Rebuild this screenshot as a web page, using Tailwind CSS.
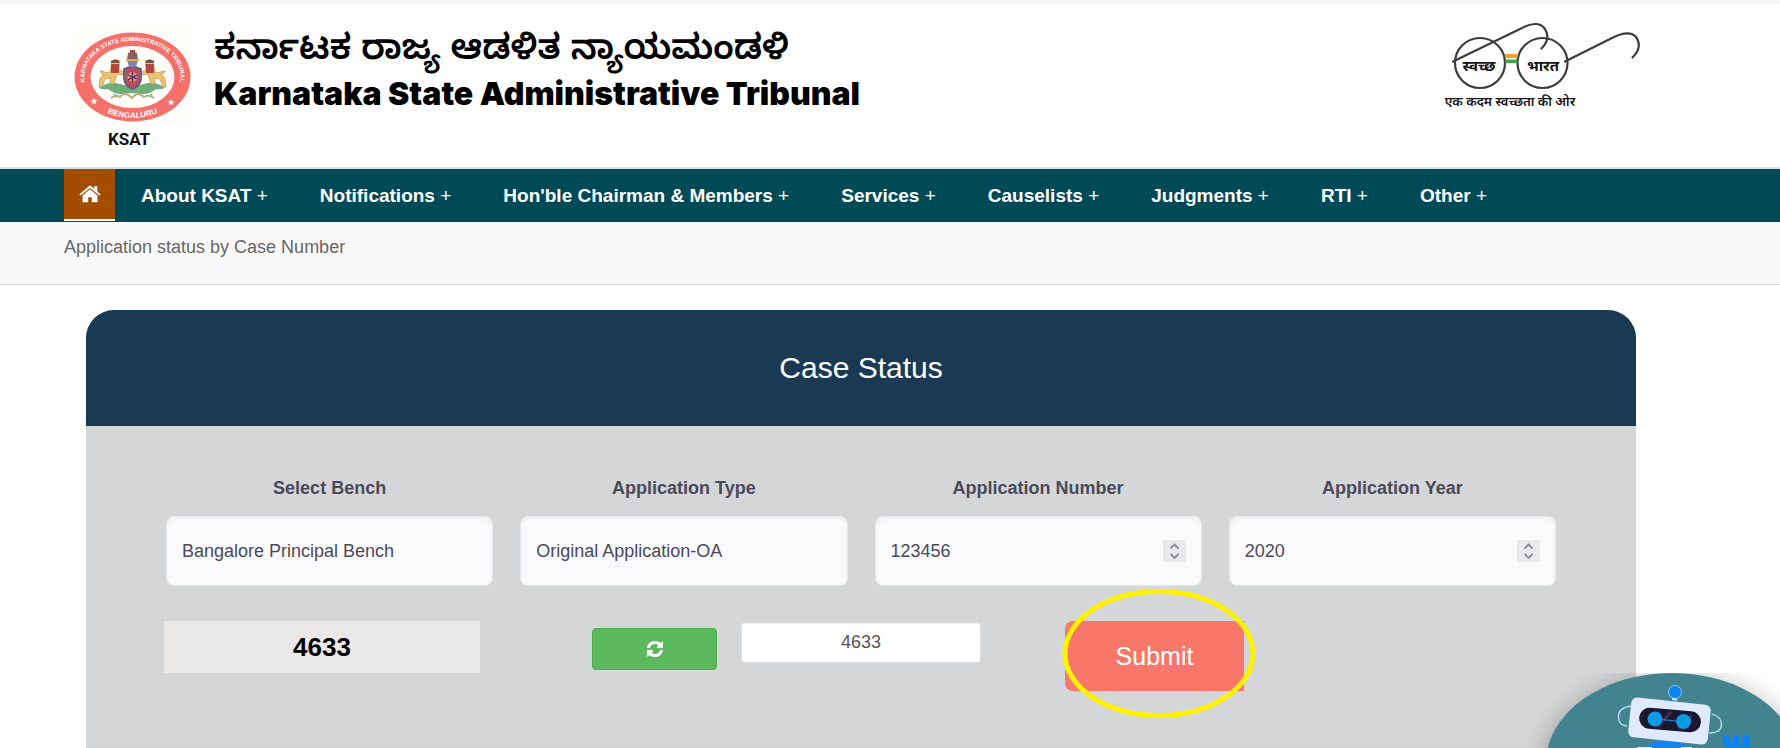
<!DOCTYPE html>
<html lang="en">
<head>
<meta charset="utf-8">
<meta name="viewport" content="width=device-width, initial-scale=1">
<title>Karnataka State Administrative Tribunal</title>
<script src="https://cdn.jsdelivr.net/npm/@tailwindcss/browser@4"></script>
</head>
<body class="min-h-screen overflow-x-hidden bg-white font-['Liberation_Sans',Arial,sans-serif] text-lg leading-6 text-[#4b4a59]">

<header class="flex items-start border-t-4 border-b-2 border-t-[#f8f8f8] border-b-[#d3e2e7] pt-5 pr-[135px] pb-[13px] pl-16">
  <svg class="h-[130px] w-[140px] shrink-0" viewBox="0 0 140 130" role="img" aria-label="KSAT emblem">
    <defs>
      <path id="ringTop" d="M25.500 69A48 36 0 1 1 111.500 69"/>
      <path id="ringBottom" d="M23 74A53 41 0 0 0 114 74"/>
    </defs>
    <rect x="10" y="4" width="117" height="96" fill="#fefdf9"/>
    <ellipse cx="68.500" cy="53" rx="58" ry="44.500" fill="#f5706a"/>
    <ellipse cx="68.500" cy="53" rx="42" ry="31" fill="#fffefb"/>
    <g fill="#fff" font-family="Liberation Sans, sans-serif" font-weight="700" text-anchor="middle">
      <text font-size="6"><textPath href="#ringTop" startOffset="50%">KARNATAKA STATE ADMINISTRATIVE TRIBUNAL</textPath></text>
      <text font-size="8"><textPath href="#ringBottom" startOffset="50%">BENGALURU</textPath></text>
    </g>
    <path fill="#fff" d="M30 74l1 2 2.500.2-2 1.600.7 2.500-2.200-1.400-2.200 1.400.7-2.500-2-1.600 2.500-.2zM107 75l1 2 2.500.2-2 1.600.7 2.500-2.200-1.400-2.200 1.400.7-2.500-2-1.600 2.500-.2z"/>
    <!-- coat of arms -->
    <path fill="#6fae7a" d="M35 64q8-6 17-5l16 4 16-4q9-1 17 5-5 2-9 1-6 5-13 5l-11-1-11 1q-7 0-13-5-5 1-9-1z"/>
    <path fill="none" stroke="#b9ae86" stroke-width="2" d="M47 74q6-4 9-1 3-4 6-3t6 4q3-4 6-4t6 3q4-3 10 1M50 70l3 3M88 70l-3 3"/>
    <g fill="#efc468" stroke="#a98a4a" stroke-width=".6">
      <path d="M38 47q5 3 8 1l2-10q5-4 8-1l-1 9 5 2-1 3-6-1-3 10h-4l1-6-6 1-3 8h-3l1-9 4-3q-3-1-4-4z"/>
      <path d="M99 47q-5 3-8 1l-2-10q-5-4-8-1l1 9-5 2 1 3 6-1 3 10h4l-1-6 6 1 3 8h3l-1-9-4-3q3-1 4-4z"/>
    </g>
    <path fill="#b04a3c" d="M47 40h8v9h-8zM82 40h8v9h-8z"/>
    <path fill="#6e4f4a" d="M47 37q4-3 8 0v2h-8zM82 37q4-3 8 0v2h-8z"/>
    <path fill="#bd4c5b" stroke="#5c6182" stroke-width="1.800" d="M60 45q8-4 17 0v10q-1 7-8.500 10Q61 62 60 55z"/>
    <circle cx="68.500" cy="53" r="5" fill="#d98d92"/>
    <path stroke="#54324c" stroke-width="1.300" fill="none" d="M68.500 48v10M64 51l9 4M64 56l9-5"/>
    <path fill="#7b86b4" d="M63 36h11l-2 7h-7z"/>
    <path fill="#8c5f5e" d="M64 29q4-3 9 0l1 7H63z"/>
    <path fill="#b9423b" d="M66 26h5v2h-5z"/>
    <path fill="#d9ad52" d="M62 35h13v2H62z"/>
    <text x="65" y="121" text-anchor="middle" font-family="Roboto, sans-serif" font-weight="700" font-size="17" fill="#111">KSAT</text>
  </svg>
  <div class="ml-[10px] pt-2 text-black">
    <p lang="kn" class="text-[35px] leading-[46px] font-semibold font-['Noto_Sans_Kannada','Noto_Sans',sans-serif]">ಕರ್ನಾಟಕ ರಾಜ್ಯ ಆಡಳಿತ ನ್ಯಾಯಮಂಡಳಿ</p>
    <h1 class="text-[32px] leading-8 font-black font-['Inter',sans-serif]">Karnataka State Administrative Tribunal</h1>
  </div>
  <svg class="-mt-2 ml-auto h-[100px] w-[205px] shrink-0" viewBox="0 0 205 100" role="img" aria-label="Swachh Bharat">
    <g fill="none" stroke="#3c3b3e" stroke-width="2.200" stroke-linecap="round">
      <circle cx="40" cy="47" r="25"/>
      <circle cx="102.500" cy="47" r="25"/>
      <path d="M13 45.500L80 13Q98 3 105 13Q111 23 101.500 32.500"/>
      <path d="M125 45.500L170 23Q189 13 196 21Q203 31 192.500 41.500"/>
    </g>
    <path fill="#f3a12c" d="M65 38h12.500v4H65z"/>
    <path fill="#3fa64a" d="M65 43.500h12.500v3.500H65z"/>
    <g fill="#151515" text-anchor="middle" font-family="Noto Sans Devanagari, Noto Sans, sans-serif" lang="hi">
      <text x="39" y="55" font-size="15" font-weight="700">स्वच्छ</text>
      <text x="103" y="55" font-size="15" font-weight="700">भारत</text>
      <text x="70" y="90" font-size="13" font-weight="600">एक कदम स्वच्छता की ओर</text>
    </g>
  </svg>
</header>

<nav class="bg-[#004956] pl-16 text-white">
  <ul class="flex h-[53px] items-start text-[19px] leading-[53px] font-bold whitespace-nowrap">
    <li><a href="#" aria-label="Home" class="flex h-[52px] w-[51px] items-center justify-center border-b-2 border-white bg-[#a34d00]">
      <svg class="h-[18px] w-[22px]" viewBox="0 0 22 18" fill="#fff"><path d="M11 4.200L3.500 10.500V17.300H9.200V12.300H12.800V17.300H18.500V10.500z"/><path d="M11 0.300L15.200 3.800V1.200H18.300V6.400L21.600 9.200L20.500 10.500L11 2.900L1.500 10.500L0.400 9.200z"/></svg>
    </a></li>
    <li><a href="#" class="block px-[26px]">About KSAT <span class="font-normal">+</span></a></li>
    <li><a href="#" class="block px-[26px]">Notifications <span class="font-normal">+</span></a></li>
    <li><a href="#" class="block px-[26px]">Hon'ble Chairman &amp; Members <span class="font-normal">+</span></a></li>
    <li><a href="#" class="block px-[26px]">Services <span class="font-normal">+</span></a></li>
    <li><a href="#" class="block px-[26px]">Causelists <span class="font-normal">+</span></a></li>
    <li><a href="#" class="block px-[26px]">Judgments <span class="font-normal">+</span></a></li>
    <li><a href="#" class="block px-[26px]">RTI <span class="font-normal">+</span></a></li>
    <li><a href="#" class="block px-[26px]">Other <span class="font-normal">+</span></a></li>
  </ul>
</nav>

<div class="border-b border-[#d9d9d9] bg-[#f9f9f9] pt-[13px] pb-[25px] pl-16 text-[#666]">Application status by Case Number</div>

<main class="pt-[25px] pr-36 pl-[86px]">
  <section class="overflow-hidden rounded-t-[28px] bg-[#d4d6d7]">
    <h2 class="bg-[#1a3a53] py-9 text-center text-[30px] leading-[44px] text-white">Case Status</h2>
    <form class="px-20 pt-[50px] pb-[57px]">
      <div class="grid grid-cols-4 gap-[27px]">
        <div class="flex flex-col gap-4">
          <label for="bench" class="text-center font-bold">Select Bench</label>
          <select id="bench" class="h-[70px] w-full appearance-none rounded-lg border border-[#e8e8ec] bg-[#fafafc] px-[15px] inset-shadow-sm">
            <option>Bangalore Principal Bench</option>
          </select>
        </div>
        <div class="flex flex-col gap-4">
          <label for="type" class="text-center font-bold">Application Type</label>
          <select id="type" class="h-[70px] w-full appearance-none rounded-lg border border-[#e8e8ec] bg-[#fafafc] px-[15px] inset-shadow-sm">
            <option>Original Application-OA</option>
          </select>
        </div>
        <div class="flex flex-col gap-4">
          <label for="number" class="text-center font-bold">Application Number</label>
          <div class="relative">
            <input id="number" type="number" value="123456" class="h-[70px] w-full appearance-none rounded-lg border border-[#e8e8ec] bg-[#fafafc] px-[15px] inset-shadow-sm [&::-webkit-inner-spin-button]:appearance-none">
            <svg class="pointer-events-none absolute top-6 right-4 h-[22px] w-[23px] bg-[#e9e9ec]" viewBox="0 0 23 22" fill="none" stroke="#8b8b92" stroke-width="1.800"><path d="M7.500 8.500l4-4 4 4M7.500 14l4 4 4-4"/></svg>
          </div>
        </div>
        <div class="flex flex-col gap-4">
          <label for="year" class="text-center font-bold">Application Year</label>
          <div class="relative">
            <input id="year" type="number" value="2020" class="h-[70px] w-full appearance-none rounded-lg border border-[#e8e8ec] bg-[#fafafc] px-[15px] inset-shadow-sm [&::-webkit-inner-spin-button]:appearance-none">
            <svg class="pointer-events-none absolute top-6 right-4 h-[22px] w-[23px] bg-[#e9e9ec]" viewBox="0 0 23 22" fill="none" stroke="#8b8b92" stroke-width="1.800"><path d="M7.500 8.500l4-4 4 4M7.500 14l4 4 4-4"/></svg>
          </div>
        </div>
      </div>
      <div class="mt-[35px] -ml-0.5 flex items-start">
        <output class="w-[316px] bg-[#eae9e7] text-center text-[26px] leading-[52px] font-bold text-black">4633</output>
        <button type="button" aria-label="Refresh captcha" class="mt-[7px] ml-28 flex h-[42px] w-[125px] items-center justify-center rounded border border-[#4cae4c] bg-[#5cb85c]">
          <svg class="h-4 w-4" viewBox="0 0 1536 1536" fill="#fff"><path stroke="#fff" stroke-width="50" d="M1511 928q0 5-1 7-64 268-268 434.500T764 1536q-146 0-282.500-55T238 1324l-129 129q-19 19-45 19t-45-19-19-45V960q0-26 19-45t45-19h448q26 0 45 19t19 45-19 45l-137 137q71 66 161 102t187 36q134 0 250-65t186-179q11-17 53-117 8-23 30-23h192q13 0 22.500 9.500t9.500 22.500zm25-800v448q0 26-19 45t-45 19h-448q-26 0-45-19t-19-45 19-45l138-138Q969 256 768 256q-134 0-250 65T332 500q-11 17-53 117-8 23-30 23H50q-13 0-22.500-9.500T18 608v-7q65-268 270-434.500T768 0q146 0 284 55.500T1297 212l130-129q19-19 45-19t45 19 19 45z"/></svg>
        </button>
        <input aria-label="Enter captcha" type="text" value="4633" class="mt-px ml-6 h-[41px] w-60 rounded border border-[#dcdcdc] bg-white text-center text-[#555] inset-shadow-2xs">
        <div class="relative ml-[84px]">
          <button type="submit" class="h-[70px] w-[179px] rounded-l-lg bg-[#f7776a] text-[25px] text-white">Submit</button>
          <svg class="pointer-events-none absolute -top-8 -left-[3px] h-[130px] w-[194px]" viewBox="0 0 194 130" fill="none" stroke="#fff200" stroke-width="5"><ellipse cx="97" cy="64.500" rx="94" ry="62"/></svg>
        </div>
      </div>
    </form>
  </section>
</main>

<!-- chat assistant launcher, partly below the fold -->
<a href="#" aria-label="Chat assistant" class="fixed right-0 bottom-0">
  <svg class="h-[75px] w-[280px]" viewBox="0 0 280 75">
    <defs><filter id="soft" x="-30%" y="-30%" width="160%" height="160%"><feGaussianBlur stdDeviation="14"/></filter></defs>
    <ellipse cx="172" cy="96" rx="126" ry="90" fill="#000" opacity=".35" filter="url(#soft)"/>
    <ellipse cx="172" cy="90" rx="126" ry="90" fill="#42838f"/>
    <g fill="none" stroke="#bfe2f5" stroke-width="1.300"><path d="M131 33q-13 2-12.500 11T127 53"/><path d="M212 41q10 3 9.500 11T209 60"/></g>
    <path fill="#dff0ff" d="M172 22h5v6h-5z"/>
    <circle cx="175" cy="19" r="6.500" fill="#0b83f2" stroke="#a9dcff" stroke-width=".8"/>
    <path fill="#1583ee" d="M162 29q10-5 23 2z"/>
    <path fill="#1583ee" d="M146 75q8-9 22-8t20 8z"/>
    <path fill="#dfeafc" d="M137 74h15v1h-15zM181 74h11v1h-11z"/>
    <rect x="129.500" y="28" width="80" height="40" rx="6" fill="#dfeafc" transform="rotate(6 169.500 48)"/>
    <rect x="139" y="36.500" width="62" height="21" rx="10.500" fill="#1c1631" transform="rotate(5 170 47)"/>
    <path stroke="#3a3150" stroke-width="3" d="M158 54l13-15M179 56l13-14"/>
    <path stroke="#1d8fd8" d="M155 46l29 2.700"/>
    <circle cx="155" cy="46" r="7.500" fill="#0d9be4"/><circle cx="183.500" cy="48.500" r="7.500" fill="#0d9be4"/>
    <g stroke="#0b83f2" stroke-linecap="round" fill="none"><path stroke-width="7" d="M226 66l3 10M236 65v12M246 65v12"/><path stroke-width="7" d="M229 76h18"/></g>
  </svg>
</a>
</body>
</html>
